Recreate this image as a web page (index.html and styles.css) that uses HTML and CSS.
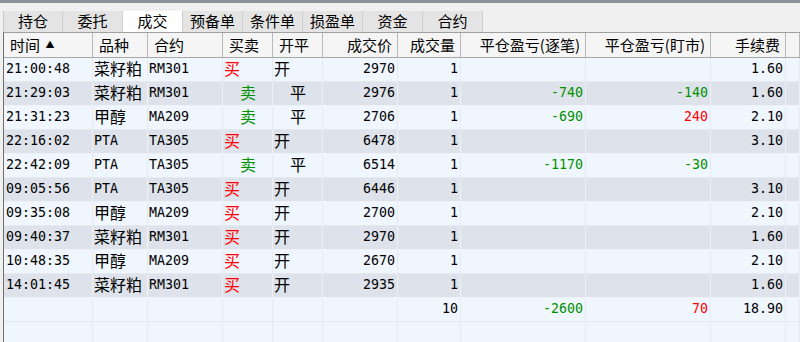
FILE: index.html
```html
<!DOCTYPE html>
<html>
	<head>
		<meta charset="utf-8" />
		<title>成交</title>
		<link rel="stylesheet" href="styles.css">
	</head>
	<body>
		<div class="topbar"></div>
		<div class="tabs">
			<div class="tab">持仓</div>
			<div class="tab">委托</div>
			<div class="tab active">成交</div>
			<div class="tab">预备单</div>
			<div class="tab">条件单</div>
			<div class="tab">损盈单</div>
			<div class="tab">资金</div>
			<div class="tab">合约</div>
		</div>
		<div class="grid">
			<div class="row head">
				<div class="c">时间 <span class="sort">▲</span></div>
				<div class="c">品种</div>
				<div class="c">合约</div>
				<div class="c">买卖</div>
				<div class="c">开平</div>
				<div class="c r">成交价</div>
				<div class="c r">成交量</div>
				<div class="c r">平仓盈亏(逐笔)</div>
				<div class="c r">平仓盈亏(盯市)</div>
				<div class="c r">手续费</div>
				<div class="c"></div>
			</div>
			<div class="row">
				<div class="c num">21:00:48</div><div class="c cn">菜籽粕</div><div class="c num">RM301</div>
				<div class="c cn buy">买</div><div class="c cn">开</div>
				<div class="c num r">2970</div><div class="c num r">1</div><div class="c num r"></div><div class="c num r"></div><div class="c num r">1.60</div><div class="c"></div>
			</div>
			<div class="row alt">
				<div class="c num">21:29:03</div><div class="c cn">菜籽粕</div><div class="c num">RM301</div>
				<div class="c cn ind sell">卖</div><div class="c cn ind">平</div>
				<div class="c num r">2976</div><div class="c num r">1</div><div class="c num r down">-740</div><div class="c num r down">-140</div><div class="c num r">1.60</div><div class="c"></div>
			</div>
			<div class="row">
				<div class="c num">21:31:23</div><div class="c cn">甲醇</div><div class="c num">MA209</div>
				<div class="c cn ind sell">卖</div><div class="c cn ind">平</div>
				<div class="c num r">2706</div><div class="c num r">1</div><div class="c num r down">-690</div><div class="c num r up">240</div><div class="c num r">2.10</div><div class="c"></div>
			</div>
			<div class="row alt">
				<div class="c num">22:16:02</div><div class="c num">PTA</div><div class="c num">TA305</div>
				<div class="c cn buy">买</div><div class="c cn">开</div>
				<div class="c num r">6478</div><div class="c num r">1</div><div class="c num r"></div><div class="c num r"></div><div class="c num r">3.10</div><div class="c"></div>
			</div>
			<div class="row">
				<div class="c num">22:42:09</div><div class="c num">PTA</div><div class="c num">TA305</div>
				<div class="c cn ind sell">卖</div><div class="c cn ind">平</div>
				<div class="c num r">6514</div><div class="c num r">1</div><div class="c num r down">-1170</div><div class="c num r down">-30</div><div class="c num r"></div><div class="c"></div>
			</div>
			<div class="row alt">
				<div class="c num">09:05:56</div><div class="c num">PTA</div><div class="c num">TA305</div>
				<div class="c cn buy">买</div><div class="c cn">开</div>
				<div class="c num r">6446</div><div class="c num r">1</div><div class="c num r"></div><div class="c num r"></div><div class="c num r">3.10</div><div class="c"></div>
			</div>
			<div class="row">
				<div class="c num">09:35:08</div><div class="c cn">甲醇</div><div class="c num">MA209</div>
				<div class="c cn buy">买</div><div class="c cn">开</div>
				<div class="c num r">2700</div><div class="c num r">1</div><div class="c num r"></div><div class="c num r"></div><div class="c num r">2.10</div><div class="c"></div>
			</div>
			<div class="row alt">
				<div class="c num">09:40:37</div><div class="c cn">菜籽粕</div><div class="c num">RM301</div>
				<div class="c cn buy">买</div><div class="c cn">开</div>
				<div class="c num r">2970</div><div class="c num r">1</div><div class="c num r"></div><div class="c num r"></div><div class="c num r">1.60</div><div class="c"></div>
			</div>
			<div class="row">
				<div class="c num">10:48:35</div><div class="c cn">甲醇</div><div class="c num">MA209</div>
				<div class="c cn buy">买</div><div class="c cn">开</div>
				<div class="c num r">2670</div><div class="c num r">1</div><div class="c num r"></div><div class="c num r"></div><div class="c num r">2.10</div><div class="c"></div>
			</div>
			<div class="row alt">
				<div class="c num">14:01:45</div><div class="c cn">菜籽粕</div><div class="c num">RM301</div>
				<div class="c cn buy">买</div><div class="c cn">开</div>
				<div class="c num r">2935</div><div class="c num r">1</div><div class="c num r"></div><div class="c num r"></div><div class="c num r">1.60</div><div class="c"></div>
			</div>
			<div class="row">
				<div class="c"></div><div class="c"></div><div class="c"></div><div class="c"></div><div class="c"></div><div class="c"></div>
				<div class="c num r">10</div><div class="c num r down">-2600</div><div class="c num r up">70</div><div class="c num r">18.90</div><div class="c"></div>
			</div>
			<div class="row">
				<div class="c"></div><div class="c"></div><div class="c"></div><div class="c"></div><div class="c"></div><div class="c"></div>
				<div class="c"></div><div class="c"></div><div class="c"></div><div class="c"></div><div class="c"></div>
			</div>
		</div>
	</body>
</html>
```

FILE: styles.css
```css
*{
	margin: 0;
	padding: 0;
	box-sizing: border-box;
}
html, body{
	height: 100%;
	overflow: hidden;
}
body{
	background: #f0f0f0;
	font-family: "Noto Sans CJK SC", "Noto Sans", sans-serif;
	color: #000;
}
.topbar{
	height: 3px;
	background: #8b929b;
}
.tabs{
	display: flex;
	margin-top: 8px;
	padding-left: 3px;
	height: 21px;
}
.tab{
	width: 60px;
	height: 21px;
	line-height: 20px;
	font-size: 15px;
	text-align: center;
	background: #e4e4e4;
	border-right: 1px solid #cfcfcf;
}
.tab:first-child{
	border-left: 1px solid #c4c4c4;
}
.tab.active{
	background: #fff;
}
.grid{
	margin-left: 3px;
	border-top: 1px solid #a0a0a0;
	border-left: 1px solid #6f6f6f;
	height: 320px;
	background: #f0f6fe;
}
.row{
	display: grid;
	grid-template-columns: 89px 55px 75px 50px 50px 75px 63px 125px 125px 75px 1fr;
	height: 24px;
	background: #f0f6fe;
}
.row.alt{
	background: #dee3eb;
}
.c{
	height: 24px;
	border-right: 1px solid #e6e9ee;
	border-bottom: 1px solid #e6e9ee;
	padding: 0 2px 0 1px;
	line-height: 21px;
	white-space: nowrap;
}
.row.alt .c{
	border-color: #eef1f5;
}
.row.head{
	background: #f5f5f5;
	border-bottom: 1px solid #a8a8a8;
	height: 25px;
}
.row.head .c{
	font-size: 15px;
	line-height: 23px;
	padding: 0 5px 0 6px;
	border-right: 1px solid #b9b9b9;
	border-bottom: 0;
}
.sort{
	font-size: 9px;
	vertical-align: 3px;
	margin-left: 2px;
}
.num{
	font-family: "DejaVu Sans Mono", "Liberation Mono", monospace;
	font-size: 13.3px;
}
.row .c.num:first-child{
	padding-left: 2px;
}
.cn{
	font-size: 16px;
}
.r{
	text-align: right;
}
.ind{
	padding-left: 17px;
}
.buy, .up{
	color: #f00;
}
.sell, .down{
	color: #009000;
}
```
